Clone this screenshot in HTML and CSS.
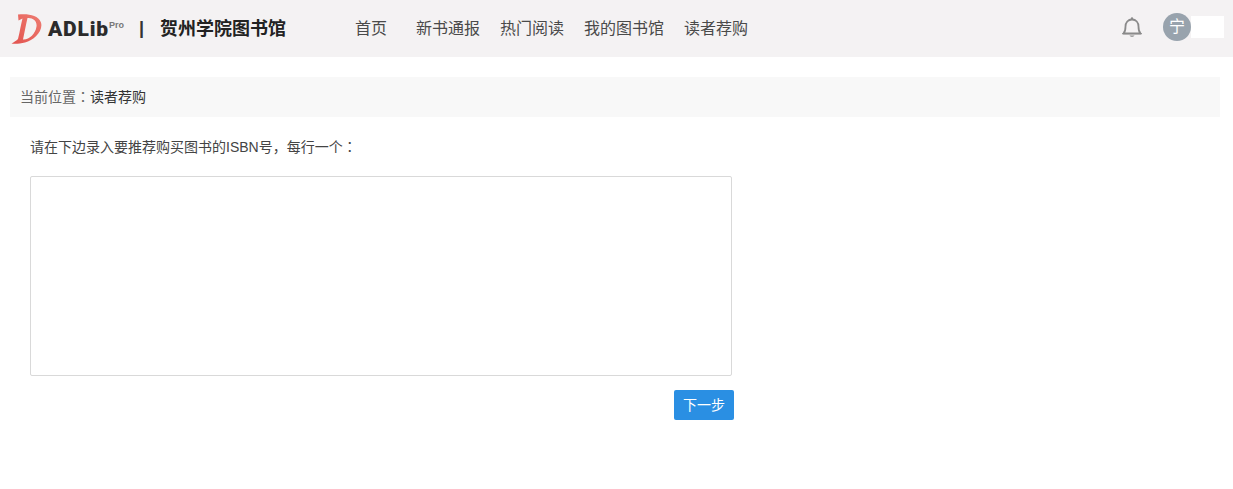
FILE: index.html
```html
<!DOCTYPE html>
<html lang="zh-CN">
<head>
<meta charset="utf-8">
<title>读者荐购</title>
<link rel="stylesheet" href="styles.css">
</head>
<body>
<header class="topbar">
  <div class="brand">
    <svg class="brand-mark" width="32" height="32" viewBox="0 0 32 32" aria-hidden="true">
      <defs>
        <linearGradient id="markfill" x1="0" y1="1" x2="1" y2="0">
          <stop offset="0" stop-color="#e2524e"/>
          <stop offset="1" stop-color="#ee7d72"/>
        </linearGradient>
      </defs>
      <path d="M7 1.500C15 .5 27 1 30 9.500C32.500 18 23 27.500 14 29.500C9 30.700 4 31 .5 30.500C3 29 5.500 27.800 7 26C9 18 10 11 11.500 5.500L7.500 7.500ZM16.500 5C15 11.500 13.500 19 12 26.500C18 27 24.500 21 25.500 13.500C26.300 8 22 4.500 16.500 5Z" fill="url(#markfill)" fill-rule="evenodd"/>
    </svg>
    <span class="brand-name">ADLib</span><sup class="brand-pro">Pro</sup>
    <span class="brand-sep">|</span>
    <span class="brand-title">贺州学院图书馆</span>
  </div>
  <nav class="nav">
    <a class="nav-item nav-home">首页</a>
    <a class="nav-item">新书通报</a>
    <a class="nav-item">热门阅读</a>
    <a class="nav-item">我的图书馆</a>
    <a class="nav-item">读者荐购</a>
  </nav>
  <div class="user">
    <svg class="bell" width="22" height="24" viewBox="0 0 22 24" aria-hidden="true">
      <path d="M2.500 18.500C4.500 16.500 4.500 14.500 4.500 11.500C4.500 7.500 7 4.500 11 4.500C15 4.500 17.500 7.500 17.500 11.500C17.500 14.500 17.500 16.500 19.500 18.500Z" fill="none" stroke="#8a8a8a" stroke-width="1.800" stroke-linejoin="round"/>
      <path d="M1 18.700H21" stroke="#8a8a8a" stroke-width="1"/>
      <path d="M8.500 20.500C9.500 22.300 12.500 22.300 13.500 20.500Z" fill="#8a8a8a"/>
      <circle cx="11" cy="3.500" r="1.200" fill="#8a8a8a"/>
    </svg>
    <div class="avatar">宁</div>
    <div class="user-name"></div>
  </div>
</header>
<main class="page">
  <div class="crumb">当前位置<span class="punct" lang="zh-TW">：</span><span class="crumb-current">读者荐购</span></div>
  <section class="form">
    <p class="hint">请在下边录入要推荐购买图书的ISBN号，每行一个<span class="punct" lang="zh-TW">：</span></p>
    <textarea class="isbn"></textarea>
    <div class="actions"><button class="next" type="button">下一步</button></div>
  </section>
</main>
</body>
</html>
```
FILE: styles.css
```css
* { box-sizing: border-box; }
html, body { margin: 0; padding: 0; }
body {
  background: #fff;
  color: #444;
  font-family: "Liberation Sans", "Noto Sans CJK SC", sans-serif;
  font-size: 14px;
  overflow: hidden;
}
.topbar {
  display: flex;
  align-items: center;
  height: 57px;
  padding-bottom: 3px;
  background: #f4f2f3;
}
.brand {
  display: flex;
  align-items: center;
  width: 355px;
  padding-left: 11px;
  flex: none;
}
.brand-mark { flex: none; margin-top: 3px; }
.brand-name {
  margin-left: 5px;
  font-family: Roboto, "Liberation Sans", sans-serif;
  font-weight: 900;
  font-size: 21px;
  letter-spacing: 0.8px;
  color: #2b2b2b;
  width: 61px;
  margin-top: 4px;
}
.brand-pro {
  font-family: "Liberation Sans", sans-serif;
  font-size: 9px;
  font-weight: 700;
  color: #777;
  width: 14px;
  margin: -5px 0 0 0;
}
.brand-sep {
  margin-left: 16px;
  font-family: "Liberation Sans", sans-serif;
  font-size: 18px;
  font-weight: 700;
  color: #333;
  margin-top: 2px;
}
.brand-title {
  margin-left: 16px;
  margin-top: 3px;
  font-size: 18px;
  line-height: 24px;
  font-weight: 700;
  color: #222;
  white-space: nowrap;
}
.nav {
  display: flex;
  gap: 20px;
  margin-top: 3px;
  color: #4a4a4a;
  font-size: 16px;
  line-height: 24px;
}
.nav-home { margin-right: 9px; }
.user {
  display: flex;
  align-items: center;
  margin-left: auto;
  padding-right: 9px;
}
.bell { margin-right: 20px; flex: none; }
.avatar {
  width: 28px;
  height: 28px;
  border-radius: 50%;
  background: #98a3ad;
  color: #fff;
  font-size: 16px;
  line-height: 27px;
  text-align: center;
}
.user-name {
  width: 33px;
  height: 22px;
  background: #fff;
}
.page { padding: 20px 13px 0 10px; }
.crumb {
  height: 40px;
  padding-left: 10px;
  background: #f8f8f8;
  font-size: 14px;
  line-height: 38px;
  color: #666;
}
.crumb-current { color: #333; }
.punct { font-family: "Noto Sans CJK TC", sans-serif; }
.form { padding-left: 20px; width: 734px; }
.hint {
  margin: 0;
  padding-top: 19px;
  height: 39px;
  font-size: 14px;
  line-height: 20px;
  color: #444;
  white-space: nowrap;
}
.isbn {
  display: block;
  width: 702px;
  height: 200px;
  margin-top: 20px;
  border: 1px solid #d9d9d9;
  border-radius: 2px;
  background: #fff;
  resize: none;
  outline: none;
}
.actions {
  display: flex;
  justify-content: flex-end;
  margin-top: 14px;
  width: 704px;
}
.next {
  width: 60px;
  height: 30px;
  padding: 0;
  border: 0;
  border-radius: 2px;
  background: #2a8fe3;
  color: #fff;
  font-family: inherit;
  font-size: 14px;
  line-height: 30px;
}
```
